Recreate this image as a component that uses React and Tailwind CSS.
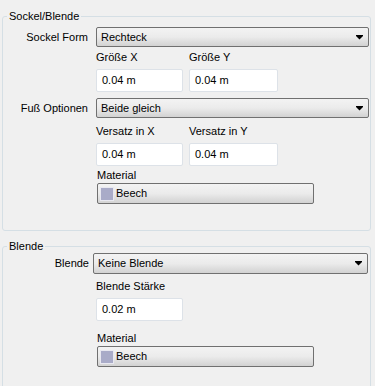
import React from "react";

const font = { fontFamily: '"Liberation Sans", Arial, sans-serif' };

const Combo = ({ value, className = "" }) => (
  <div
    className={`relative h-[20px] rounded-[2px] border border-[#707070] bg-linear-to-b from-[#f3f3f3] via-[#ebebeb] to-[#d2d2d2] pl-[4px] text-[11px] leading-[18px] text-black ${className}`}
  >
    {value}
    <svg className="absolute right-[4px] top-[7px]" width="8" height="5" viewBox="0 0 8 5">
      <path d="M0 0H7V1L3.5 4.5L0 1Z" fill="#000" />
    </svg>
  </div>
);

const Field = ({ label, value, width = "w-[87px]" }) => (
  <div className="flex flex-col">
    <div className="h-[13px] text-[11px] leading-[13px] text-black">{label}</div>
    <div
      className={`mt-[5px] h-[23px] ${width} rounded-[2px] border border-[#dde2e8] bg-white pl-[5px] text-[11px] leading-[21px] text-black`}
    >
      {value}
    </div>
  </div>
);

const MaterialButton = () => (
  <div className="flex flex-col">
    <div className="h-[13px] text-[11px] leading-[13px] text-black">Material</div>
    <div className="mt-[1px] flex h-[21px] w-[217px] items-center rounded-[2px] border border-[#707070] bg-linear-to-b from-[#f3f3f3] via-[#ebebeb] to-[#d2d2d2] pl-[2px] text-[11px] text-black">
      <span className="mr-[2px] h-[14px] w-[14px] border border-[#e8e8f0] bg-[#a9abc8]" />
      Beech
    </div>
  </div>
);

export default function App() {
  return (
    <div
      className="h-[386px] w-[375px] overflow-hidden bg-[#f0f0f0] pt-[9px]"
      style={font}
    >
      <fieldset className="ml-[2px] h-[222px] w-[369px] rounded-[3px] border border-[#d5dfe5] px-0">
        <legend className="ml-[4px] px-[2px] text-[11px] leading-[14px] text-black">
          Sockel/Blende
        </legend>
        <div className="mt-[4px] flex items-center">
          <div className="w-[85px] text-right text-[11px] text-black">Sockel Form</div>
          <Combo value="Rechteck" className="ml-[8px] w-[273px]" />
        </div>
        <div className="ml-[93px] mt-[4px] flex gap-[6px]">
          <Field label="Größe X" value="0.04 m" />
          <Field label="Größe Y" value="0.04 m" width="w-[89px]" />
        </div>
        <div className="mt-[6px] flex items-center">
          <div className="w-[85px] text-right text-[11px] text-black">Fuß Optionen</div>
          <Combo value="Beide gleich" className="ml-[8px] w-[273px]" />
        </div>
        <div className="ml-[93px] mt-[7px] flex gap-[6px]">
          <Field label="Versatz in X" value="0.04 m" />
          <Field label="Versatz in Y" value="0.04 m" width="w-[89px]" />
        </div>
        <div className="ml-[94px] mt-[3px]">
          <MaterialButton />
        </div>
      </fieldset>

      <fieldset className="ml-[2px] mt-[8px] h-[200px] w-[369px] rounded-[3px] border border-[#d5dfe5] px-0">
        <legend className="ml-[4px] px-[2px] text-[11px] leading-[14px] text-black">
          Blende
        </legend>
        <div className="flex items-center">
          <div className="w-[86px] text-right text-[11px] text-black">Blende</div>
          <Combo value="Keine Blende" className="ml-[4px] h-[21px] w-[275px]" />
        </div>
        <div className="ml-[93px] mt-[6px]">
          <Field label="Blende Stärke" value="0.02 m" />
        </div>
        <div className="ml-[94px] mt-[11px]">
          <MaterialButton />
        </div>
      </fieldset>
    </div>
  );
}
